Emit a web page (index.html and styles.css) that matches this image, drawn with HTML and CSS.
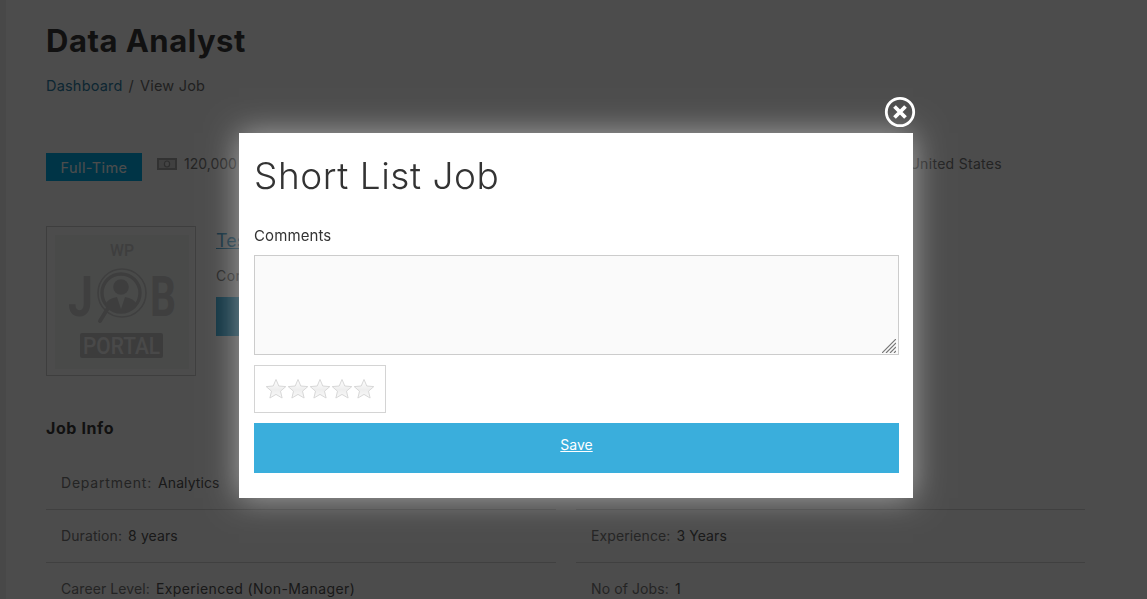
FILE: index.html
```html
<!DOCTYPE html>
<html lang="en">
<head>
<meta charset="utf-8">
<title>Data Analyst</title>
<link rel="stylesheet" href="styles.css">
</head>
<body>
<main class="page">
  <h1 class="title">Data Analyst</h1>
  <nav class="crumbs"><a href="#">Dashboard</a><span class="sep">/</span><span>View Job</span></nav>
  <div class="meta">
    <span class="type">Full-Time</span>
    <span class="salary">
      <svg class="money" viewBox="0 0 20 12" width="20" height="12"><rect x="1" y="1" width="18" height="10" fill="#d6d6d6" stroke="#a8a8a8" stroke-width="2"/><ellipse cx="10" cy="6" rx="2.6" ry="3" fill="#e4e4e4" stroke="#999" stroke-width="1.2"/></svg>
      120,000
    </span>
    <span class="country">United States</span>
  </div>
  <section class="company">
    <div class="logo-frame">
      <svg class="logo" viewBox="0 0 134 134" width="134" height="134">
        <rect width="134" height="134" fill="#f4f8f6"/>
        <text x="67" y="21" text-anchor="middle" class="logo-wp" textLength="24" lengthAdjust="spacingAndGlyphs">WP</text>
        <text x="13" y="81" class="logo-big" textLength="25" lengthAdjust="spacingAndGlyphs">J</text>
        <text x="95" y="81" class="logo-big" textLength="26" lengthAdjust="spacingAndGlyphs">B</text>
        <circle cx="67" cy="58" r="24" fill="#f4f8f6" stroke="#d2d2d2" stroke-width="1.6"/>
        <circle cx="66" cy="58" r="19" fill="none" stroke="#cfcfcf" stroke-width="3.4"/>
        <circle cx="66" cy="52" r="7.8" fill="#cfcfcf"/>
        <path d="M50 70 Q53 63 62 62 L66 74 L70 62 Q79 63 82 70 Q75 77 66 77 Q57 77 50 70Z" fill="#cfcfcf"/>
        <path d="M53 73 L45 86" stroke="#cfcfcf" stroke-width="4" stroke-linecap="round"/>
        <rect x="25" y="98" width="83" height="25" rx="2" fill="#c8c8c8"/>
        <text x="28" y="119" class="logo-portal" textLength="77" lengthAdjust="spacingAndGlyphs">PORTAL</text>
      </svg>
    </div>
    <div class="company-info">
      <a class="company-name" href="#">Test</a>
      <p class="company-line">Company</p>
      <a class="company-btn" href="#"></a>
    </div>
  </section>
  <h2 class="info-head">Job Info</h2>
  <div class="info-grid">
    <div class="info-row"><span class="label label-wide">Department:</span><span>Analytics</span></div>
    <div class="info-row"><span class="label">Category:</span><span>Computer</span></div>
    <div class="info-row"><span class="label">Duration:</span><span>8 years</span></div>
    <div class="info-row"><span class="label">Experience:</span><span>3 Years</span></div>
    <div class="info-row"><span class="label">Career Level:</span><span class="value-wide">Experienced (Non-Manager)</span></div>
    <div class="info-row"><span class="label">No of Jobs:</span><span>1</span></div>
  </div>
</main>

<div class="overlay">
  <div class="modal">
    <button class="close" type="button" aria-label="Close">
      <svg viewBox="0 0 32 32" width="32" height="32"><circle cx="16" cy="16" r="13.7" fill="none" stroke="#fff" stroke-width="2.8"/><path d="M10.5 10.5 L21.5 21.5 M21.5 10.5 L10.5 21.5" stroke="#fff" stroke-width="3.8"/></svg>
    </button>
    <h2 class="modal-title">Short List Job</h2>
    <label class="field-label" for="comments">Comments</label>
    <div class="comments-wrap">
      <textarea id="comments" class="comments"></textarea>
      <svg class="grip" viewBox="0 0 14 14" width="14" height="14"><path d="M0 14 L14 0 M4 14 L14 4 M8 14 L14 8 M12 14 L14 12" stroke="#777" stroke-width="1.2" fill="none"/></svg>
    </div>
    <div class="rating">
      <svg class="star" viewBox="0 0 22 22" width="22" height="22"><defs><linearGradient id="starfill" x1="0" y1="0" x2="0" y2="1"><stop offset="0" stop-color="#ffffff"/><stop offset=".55" stop-color="#eeeeee"/><stop offset="1" stop-color="#fafafa"/></linearGradient></defs><path d="M11 1.5 L13.8 8 L20.8 8.6 L15.5 13.2 L17.1 20 L11 16.4 L4.9 20 L6.5 13.2 L1.2 8.6 L8.2 8Z" fill="url(#starfill)" stroke="#d8d8d8" stroke-linejoin="round"/></svg>
      <svg class="star" viewBox="0 0 22 22" width="22" height="22"><path d="M11 1.5 L13.8 8 L20.8 8.6 L15.5 13.2 L17.1 20 L11 16.4 L4.9 20 L6.5 13.2 L1.2 8.6 L8.2 8Z" fill="url(#starfill)" stroke="#d8d8d8" stroke-linejoin="round"/></svg>
      <svg class="star" viewBox="0 0 22 22" width="22" height="22"><path d="M11 1.5 L13.8 8 L20.8 8.6 L15.5 13.2 L17.1 20 L11 16.4 L4.9 20 L6.5 13.2 L1.2 8.6 L8.2 8Z" fill="url(#starfill)" stroke="#d8d8d8" stroke-linejoin="round"/></svg>
      <svg class="star" viewBox="0 0 22 22" width="22" height="22"><path d="M11 1.5 L13.8 8 L20.8 8.6 L15.5 13.2 L17.1 20 L11 16.4 L4.9 20 L6.5 13.2 L1.2 8.6 L8.2 8Z" fill="url(#starfill)" stroke="#d8d8d8" stroke-linejoin="round"/></svg>
      <svg class="star" viewBox="0 0 22 22" width="22" height="22"><path d="M11 1.5 L13.8 8 L20.8 8.6 L15.5 13.2 L17.1 20 L11 16.4 L4.9 20 L6.5 13.2 L1.2 8.6 L8.2 8Z" fill="url(#starfill)" stroke="#d8d8d8" stroke-linejoin="round"/></svg>
    </div>
    <a class="save" href="#">Save</a>
  </div>
</div>
</body>
</html>
```
FILE: styles.css
```css
* { box-sizing: border-box; }
html, body { margin: 0; height: 100%; overflow: hidden; }
body {
  background: #fff;
  font-family: Inter, "Liberation Sans", sans-serif;
  color: #4a4a4a;
  font-size: 14px;
}
.page {
  height: 599px;
  overflow: hidden;
  padding: 0 62px 0 40px;
  border-left: 6px solid #f0f0f0;
}
.title { margin: 0; padding-top: 22px; font-size: 31px; line-height: 38px; font-weight: 700; color: #3a3a3a; letter-spacing: .5px; }
.crumbs { margin-top: 15px; line-height: 22px; font-size: 14.5px; display: flex; gap: 6px; color: #6d6d6d; letter-spacing: .2px; }
.crumbs a { color: #2f7fa8; text-decoration: none; }
.meta { margin-top: 56px; height: 28px; display: flex; align-items: flex-start; font-size: 14px; color: #777; }
.type { width: 96px; height: 28px; background: #00b0ec; color: #fff; display: flex; align-items: center; justify-content: center; font-size: 14.5px; letter-spacing: .4px; }
.salary { margin-left: 15px; display: flex; align-items: center; gap: 7px; line-height: 22px; }
.money { display: block; }
.country { margin-left: auto; margin-right: 83px; line-height: 22px; letter-spacing: .3px; }
.company { margin-top: 45px; display: flex; gap: 20px; }
.logo-frame { width: 150px; height: 150px; border: 1px solid #d0d0d0; padding: 8px; }
.logo { display: block; }
.logo-wp { font: 500 17px Roboto, sans-serif; fill: #d0d0d0; }
.logo-big { font: 700 56px Roboto, sans-serif; fill: #d2d2d2; }
.logo-portal { font: 500 24px Roboto, sans-serif; fill: #f4f4f4; }
.company-info { padding-top: 3px; width: 120px; flex: none; }
.company-name { color: #3a98c8; font-size: 18px; line-height: 24px; display: block; }
.company-line { margin: 13px 0 0; color: #777; line-height: 20px; letter-spacing: .4px; }
.company-btn { display: block; margin-top: 11px; width: 120px; height: 39px; background: #3aaedc; }
.info-head { margin: 41px 0 0; font-size: 16px; line-height: 22px; font-weight: 700; color: #3a3a3a; letter-spacing: .6px; }
.info-grid { margin-top: 18px; display: grid; grid-template-columns: 510px 509px; column-gap: 20px; }
.info-row { height: 53px; padding: 0 15px 1px; display: flex; align-items: center; gap: 6px; border-bottom: 1px solid #d8d8d8; color: #555; font-size: 14px; letter-spacing: .1px; }
.info-row .label { color: #7a7a7a; letter-spacing: .1px; }
.info-row .label-wide { letter-spacing: .8px; }
.value-wide { letter-spacing: .4px; }
.overlay {
  position: fixed;
  inset: 0;
  background: rgba(0, 0, 0, .7);
  display: flex;
  justify-content: center;
  align-items: flex-start;
  padding-top: 133px;
}
.modal {
  position: relative;
  width: 674px;
  height: 365px;
  margin-left: 5px;
  padding: 15px;
  background: #fff;
  box-shadow: 0 0 30px rgba(255, 255, 255, .5);
  color: #333;
  display: flex;
  flex-direction: column;
  align-items: flex-start;
}
.close {
  position: absolute;
  top: -37px;
  right: -3px;
  width: 32px;
  height: 32px;
  padding: 0;
  border: 0;
  background: none;
}
.close svg { display: block; }
.modal-title { margin: 0; font-size: 37px; line-height: 56px; font-weight: 350; color: #333; letter-spacing: .55px; }
.field-label { margin-top: 21px; line-height: 22px; font-size: 15px; color: #333; letter-spacing: .1px; }
.comments-wrap { position: relative; margin-top: 8px; width: 645px; height: 100px; }
.comments {
  display: block;
  width: 645px;
  height: 100px;
  background: #fafafa;
  border: 1px solid #ccc;
  border-radius: 0;
  outline: 0;
  resize: none;
}
.grip { position: absolute; right: 3px; bottom: 2px; }
.rating {
  margin-top: 10px;
  width: 132px;
  height: 48px;
  border: 1px solid #d4d4d4;
  display: flex;
  align-items: center;
  padding-left: 10px;
}
.star { display: block; flex: none; }
.save {
  margin-top: 10px;
  width: 645px;
  height: 50px;
  background: #3aaedc;
  color: #fff;
  font-size: 14px;
  line-height: 44px;
  text-align: center;
}
```
